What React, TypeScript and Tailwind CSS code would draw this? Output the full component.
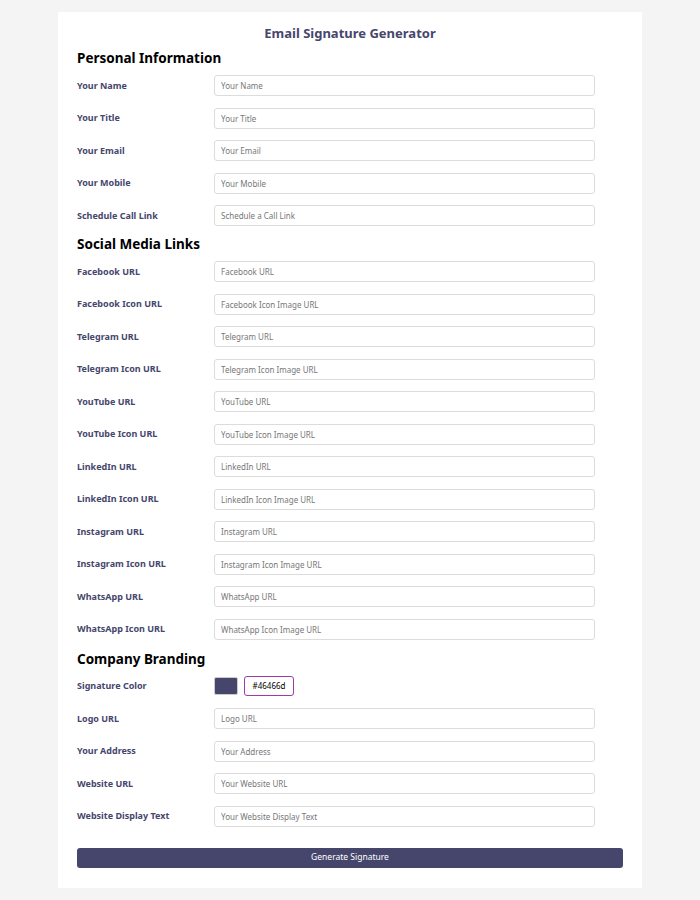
const personal = [
  ["Your Name", "Your Name"],
  ["Your Title", "Your Title"],
  ["Your Email", "Your Email"],
  ["Your Mobile", "Your Mobile"],
  ["Schedule Call Link", "Schedule a Call Link"],
];

const social = [
  ["Facebook URL", "Facebook URL"],
  ["Facebook Icon URL", "Facebook Icon Image URL"],
  ["Telegram URL", "Telegram URL"],
  ["Telegram Icon URL", "Telegram Icon Image URL"],
  ["YouTube URL", "YouTube URL"],
  ["YouTube Icon URL", "YouTube Icon Image URL"],
  ["LinkedIn URL", "LinkedIn URL"],
  ["LinkedIn Icon URL", "LinkedIn Icon Image URL"],
  ["Instagram URL", "Instagram URL"],
  ["Instagram Icon URL", "Instagram Icon Image URL"],
  ["WhatsApp URL", "WhatsApp URL"],
  ["WhatsApp Icon URL", "WhatsApp Icon Image URL"],
];

const branding = [
  ["Logo URL", "Logo URL"],
  ["Your Address", "Your Address"],
  ["Website URL", "Your Website URL"],
  ["Website Display Text", "Your Website Display Text"],
];

const Label = ({ text }: { text: string }) => (
  <label className="w-[137px] shrink-0 text-[9px] font-bold text-[#46466d]">{text}</label>
);

const Row = ({ label, ph }: { label: string; ph: string }) => (
  <div className="flex items-center h-[21px]">
    <Label text={label} />
    <input
      placeholder={ph}
      className="w-[381px] h-[21px] rounded-[3px] border border-[#dcdcdc] bg-white px-[6px] text-[8px] placeholder:text-[#777] outline-none [font-family:'Liberation_Sans',Arial,sans-serif]"
    />
  </div>
);

const Heading = ({ text }: { text: string }) => (
  <h2 className="h-[18px] leading-[18px] text-[13.5px] font-bold text-black mb-[8px]">{text}</h2>
);

export default function App() {
  return (
    <div className="min-h-[900px] bg-[#f4f4f4] pt-[12px] [font-family:'Open_Sans',sans-serif]">
      <div className="mx-auto w-[584px] bg-white px-[19px] pt-[14px] pb-[20px]">
        <h1 className="text-center text-[13px] leading-[14px] font-bold text-[#46466d] mb-[9px]">Email Signature Generator</h1>

        <Heading text="Personal Information" />
        <div className="flex flex-col gap-[11.5px]">
          {personal.map(([l, p]) => <Row key={l} label={l} ph={p} />)}
        </div>

        <div className="mt-[9px]">
          <Heading text="Social Media Links" />
          <div className="flex flex-col gap-[11.5px]">
            {social.map(([l, p]) => <Row key={l} label={l} ph={p} />)}
          </div>
        </div>

        <div className="mt-[10px]">
          <Heading text="Company Branding" />
          <div className="flex flex-col gap-[11.5px]">
            <div className="flex items-center h-[21px]">
              <Label text="Signature Color" />
              <div className="w-[24px] h-[18px] bg-[#46466d] border border-[#ccc] rounded-[2px]" />
              <div className="ml-[6px] w-[50px] h-[20px] rounded-[3px] border-[1.5px] border-[#a03aa8] flex items-center justify-center text-[8px] text-black [font-family:'Liberation_Sans',Arial,sans-serif]">#46466d</div>
            </div>
            {branding.map(([l, p]) => <Row key={l} label={l} ph={p} />)}
          </div>
        </div>

        <button className="mt-[21px] w-full h-[20px] rounded-[3px] bg-[#46466d] text-white text-[8.5px] [font-family:'Liberation_Sans',Arial,sans-serif]">Generate Signature</button>
      </div>
    </div>
  );
}
